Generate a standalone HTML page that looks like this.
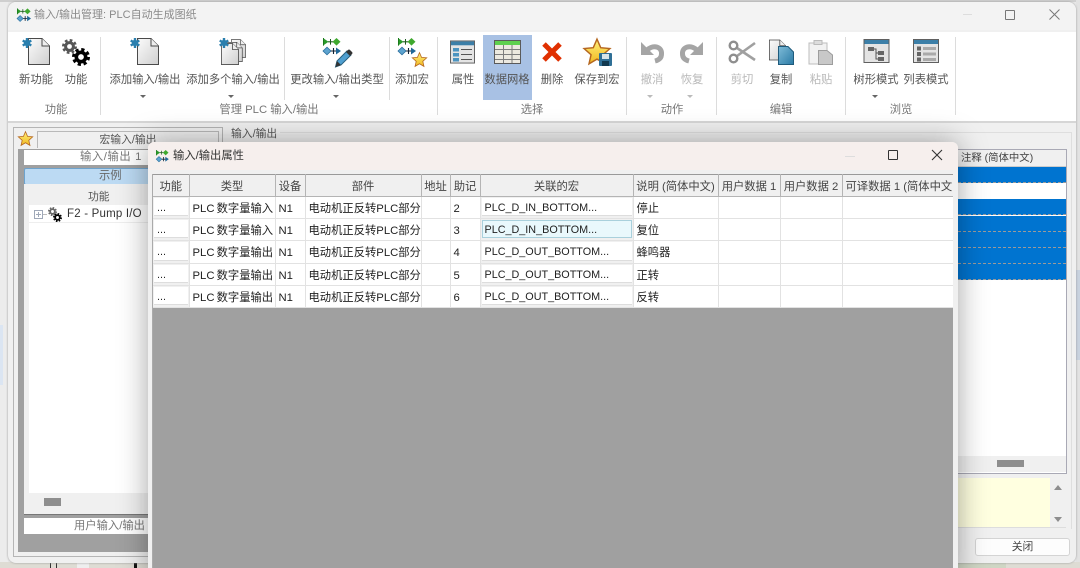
<!DOCTYPE html>
<html lang="zh"><head><meta charset="utf-8"><title>输入/输出管理</title>
<style>
html,body{margin:0;padding:0;width:1080px;height:568px;overflow:hidden;background:#e8e8e8}
body{font-family:"Liberation Sans","Noto Sans CJK SC",sans-serif;font-size:11.3px;color:#333;position:relative}
.a{position:absolute}
.t{position:absolute;white-space:nowrap;text-align:center;transform:translateX(-50%);line-height:14px;color:#555}
.d{color:#b8b8b8}
.sep{position:absolute;width:1px;background:#dcdcdc;top:37px}
.ar{position:absolute;top:95px;width:0;height:0;border-left:3px solid transparent;border-right:3px solid transparent;border-top:3px solid #666}
svg{position:absolute;overflow:visible}
table{border-collapse:collapse;table-layout:fixed;position:absolute;left:0;top:0;width:801px}
td,th{padding:2px 0 0 3px;height:19px;border-right:1px solid #e2e2e2;border-bottom:1px solid #e2e2e2;font-weight:normal;white-space:nowrap;overflow:hidden;color:#222;background:#fff;text-align:left;line-height:14px}
th{background:#f0f0f0;color:#444;text-align:center;padding:2px 0 0 0;height:19px;border-top:1px solid #999;border-right:1px solid #b4b4b4;border-bottom:1px solid #b4b4b4}
td.p{word-spacing:-1px}
tr.x td{height:20px}
td.b,tr.x td.b{padding:0;background:#f0f0f0;height:21px}
tr.x td.b{height:22px}
td.b div{margin:1px 1px 2px 1px;height:17px;line-height:20px;background:#fff;padding-left:3px;border-bottom:1px solid #ddd;font-size:10.8px;overflow:hidden}
tr.x td.b div{height:18px}
td.b div.h{background:#e9f8fc;outline:1px solid #a9d0dc;outline-offset:-1px}
.blue{position:absolute;left:958px;width:108px;height:15px;background:#0074d0;border-bottom:1px dashed #9a9a9a}
</style></head><body>

<svg width="0" height="0" style="position:absolute">
<defs>
<linearGradient id="gd" x1="0" y1="0" x2="1" y2="1"><stop offset="0" stop-color="#fbfbfb"/><stop offset="1" stop-color="#cfcfcf"/></linearGradient>
<linearGradient id="gb" x1="0" y1="0" x2="1" y2="1"><stop offset="0" stop-color="#7fbcd8"/><stop offset="1" stop-color="#2a7aa5"/></linearGradient>
<linearGradient id="gs" x1="0" y1="0" x2="0" y2="1"><stop offset="0" stop-color="#fff07a"/><stop offset="1" stop-color="#f0b820"/></linearGradient>
<symbol id="doc" viewBox="0 0 22 27" overflow="visible"><path d="M.5.5H14L21.5 8V26.5H.5Z" fill="url(#gd)" stroke="#4a4a4a"/><path d="M14 .5V8H21.5" fill="#eee" stroke="#4a4a4a"/></symbol>
<symbol id="ast" viewBox="0 0 10 10"><path d="M5 0V10M.7 2.5L9.3 7.5M.7 7.5L9.3 2.5" stroke="#2a7fae" stroke-width="2.4"/><circle cx="5" cy="5" r="3.2" fill="#2a7fae"/></symbol>
<symbol id="gear" viewBox="0 0 20 20"><circle cx="10" cy="10" r="5.2" fill="none" stroke="currentColor" stroke-width="4"/><circle cx="10" cy="10" r="8.4" fill="none" stroke="currentColor" stroke-width="3.200" stroke-dasharray="3.600 3"/></symbol>
<symbol id="flow" viewBox="0 0 18 17" overflow="visible"><path d="M0 0L5.500 3.800L0 7.600Z" fill="#2a9a2a"/><path d="M.5 0V7.600" stroke="#1d7a1d" stroke-width="1"/><path d="M5 3.800H10" stroke="#1d5a1d" stroke-width="1.100"/><path d="M7.500 1V6.600" stroke="#1d5a1d" stroke-width="1"/><path d="M9.500 3.800L13.500 0L17.500 3.800L13.500 7.600Z" fill="#3fa92f"/><path d="M0 13L4 9.200L8 13L4 16.800Z" fill="#5da3cf" stroke="#2a6f9e" stroke-width=".8"/><path d="M8 13H14M10.500 10V16" stroke="#123" stroke-width="1.100"/><path d="M13 9.500L18 13L13 16.500Z" fill="#1f6798"/></symbol>
<symbol id="star" viewBox="0 0 24 24" overflow="visible"><path d="M12 1L15.300 8.600L23.500 9.400L17.300 14.900L19.100 23L12 18.800L4.900 23L6.700 14.900L.5 9.400L8.700 8.600Z" fill="url(#gs)" stroke="#b5671f" stroke-width="1.300"/></symbol>
<symbol id="win" viewBox="0 0 26 24"><rect x=".5" y=".5" width="25" height="23" fill="#e4e4e4" stroke="#606060"/><rect x="1" y="1" width="24" height="4" fill="#3c7fa8"/></symbol>
</defs></svg>

<!-- outside bits -->
<div class="a" style="left:0;top:0;width:8px;height:568px;background:#ececec"></div>
<div class="a" style="left:0;top:325px;width:3px;height:60px;background:#dbe5f2"></div>
<div class="a" style="left:0;top:0;width:1080px;height:2px;background:#cfcfcf"></div>
<div class="a" style="left:1076px;top:0;width:4px;height:568px;background:#e2e2e2"></div>
<div class="a" style="left:1076px;top:270px;width:4px;height:90px;background:#c9d2df"></div>
<div class="a" style="left:0;top:562px;width:1080px;height:6px;background:#dedcd4"></div>
<div class="a" style="left:50px;top:562px;width:1px;height:6px;background:#333"></div>
<div class="a" style="left:56px;top:562px;width:1px;height:6px;background:#333"></div>
<div class="a" style="left:77px;top:562px;width:12px;height:6px;background:#eee"></div>
<div class="a" style="left:134px;top:562px;width:3px;height:6px;background:#111"></div>
<div class="a" style="left:958px;top:563px;width:48px;height:5px;background:#cfd6c4"></div>

<!-- main window -->
<div class="a" style="left:8px;top:2px;width:1068px;height:561px;background:#f0f0f0;border-radius:8px;box-shadow:0 0 2px #999;overflow:hidden">
 <div class="a" style="left:0;top:0;width:1068px;height:28px;background:#f3f3f3"></div>
 <div class="a" style="left:0;top:30px;width:1068px;height:89px;background:#fff;border-bottom:2px solid #d6d6d6"></div>
</div>

<!-- title -->
<svg style="left:17px;top:8px" width="14" height="14"><use href="#flow" width="14" height="14"/></svg>
<div class="a" style="left:34px;top:7px;line-height:16px;color:#8a8a8a;font-size:11px;white-space:nowrap">输入/输出管理: PLC自动生成图纸</div>
<div class="a" style="left:963px;top:14px;width:9px;height:1px;background:#ddd"></div>
<div class="a" style="left:1005px;top:10px;width:8px;height:8px;border:1px solid #777;border-radius:1px"></div>
<svg style="left:1049px;top:9px" width="11" height="11"><path d="M.5.5L10.500 10.500M10.500.5L.5 10.500" stroke="#777" stroke-width="1"/></svg>

<!-- ribbon selection -->
<div class="a" style="left:483px;top:35px;width:49px;height:65px;background:#a8c1e4"></div>

<!-- separators -->
<div class="sep" style="left:100px;height:78px"></div>
<div class="sep" style="left:284px;height:63px"></div>
<div class="sep" style="left:389px;height:63px"></div>
<div class="sep" style="left:437px;height:78px"></div>
<div class="sep" style="left:626px;height:78px"></div>
<div class="sep" style="left:716px;height:78px"></div>
<div class="sep" style="left:845px;height:78px"></div>
<div class="sep" style="left:955px;height:78px"></div>

<!-- icons -->
<svg style="left:28px;top:38px" width="22" height="27"><use href="#doc" width="22" height="27"/></svg>
<svg style="left:22px;top:38px" width="10" height="10"><use href="#ast" width="10" height="10"/></svg>
<svg style="left:62px;top:39px;color:#555" width="15" height="15"><use href="#gear" width="15" height="15"/></svg>
<svg style="left:72px;top:48px;color:#000" width="18" height="18"><use href="#gear" width="18" height="18"/></svg>
<svg style="left:137px;top:38px" width="22" height="27"><use href="#doc" width="22" height="27"/></svg>
<svg style="left:130px;top:38px" width="10" height="10"><use href="#ast" width="10" height="10"/></svg>
<svg style="left:231px;top:39px" width="15" height="19"><use href="#doc" width="15" height="19"/></svg>
<svg style="left:226px;top:42px" width="17" height="20"><use href="#doc" width="17" height="20"/></svg>
<svg style="left:221px;top:43px" width="18" height="22"><use href="#doc" width="18" height="22"/></svg>
<svg style="left:219px;top:38px" width="10" height="10"><use href="#ast" width="10" height="10"/></svg>
<svg style="left:323px;top:38px" width="18" height="17"><use href="#flow" width="18" height="17"/></svg>
<svg style="left:334px;top:48px" width="18" height="20"><path d="M1.500 19L3 13L13 3L17 7L7 17Z" fill="#4f9fd0" stroke="#26607f"/><path d="M12 4L14 2Q15 1 16 2L18 4Q19 5 18 6L16 8Z" fill="#333"/><path d="M1.500 19L3 13L7 17Z" fill="#333"/></svg>
<svg style="left:398px;top:38px" width="18" height="17"><use href="#flow" width="18" height="17"/></svg>
<svg style="left:412px;top:52px" width="15" height="15"><use href="#star" width="15" height="15"/></svg>
<svg style="left:450px;top:40px" width="25" height="24"><use href="#win" width="25" height="24"/><rect x="3" y="8" width="6" height="3.500" fill="#4c94c0"/><rect x="3" y="13" width="6" height="3.500" fill="#4c94c0"/><rect x="3" y="18" width="6" height="3.500" fill="#4c94c0"/><path d="M11 9.500H22M11 14.500H22M11 19.500H22" stroke="#555"/></svg>
<svg style="left:494px;top:40px" width="27" height="24"><rect x=".5" y=".5" width="26" height="23" fill="#ece9e0" stroke="#5a5a5a"/><rect x="1" y="1" width="25" height="4" fill="#5ed04e"/><path d="M1 9.500H26M1 14.500H26M1 19.500H26M9.500 5V23M18 5V23" stroke="#7d7d7d"/></svg>
<svg style="left:541px;top:41px" width="22" height="22"><path d="M3 3L19 19M19 3L3 19" stroke="#e03000" stroke-width="5"/></svg>
<svg style="left:583px;top:38px" width="28" height="27"><use href="#star" width="28" height="27"/></svg>
<svg style="left:599px;top:53px" width="13" height="13"><rect width="13" height="13" rx="1" fill="#2f6f96"/><rect x="3" y="1" width="7" height="5" fill="#d8e4ea"/><rect x="3" y="8" width="7" height="5" fill="#12394f"/></svg>
<svg style="left:640px;top:41px" width="24" height="22"><path d="M7 9C14 3 22 6 21.500 13C21.500 17 19 19 15 20" fill="none" stroke="#a5a5a5" stroke-width="5"/><path d="M1 1V14H14Z" fill="#a5a5a5"/></svg>
<svg style="left:680px;top:41px" width="24" height="22"><path d="M17 9C10 3 2 6 2.500 13C2.500 17 5 19 9 20" fill="none" stroke="#a5a5a5" stroke-width="5"/><path d="M23 1V14H10Z" fill="#a5a5a5"/></svg>
<svg style="left:728px;top:40px" width="28" height="24"><path d="M9 8L27 20M9 16L27 3" stroke="#a0a0a0" stroke-width="2.600"/><circle cx="5.500" cy="5.500" r="3.800" fill="#fff" stroke="#8e8e8e" stroke-width="2.400"/><circle cx="5.500" cy="18.500" r="3.800" fill="#fff" stroke="#8e8e8e" stroke-width="2.400"/></svg>
<svg style="left:769px;top:39px" width="17" height="22"><use href="#doc" width="17" height="22"/></svg>
<svg style="left:778px;top:46px" width="16" height="19"><path d="M.5.5H10L15.500 6V18.500H.5Z" fill="url(#gb)" stroke="#1f5b7c"/></svg>
<svg style="left:808px;top:40px" width="25" height="25"><path d="M1 3H19V24H1Z" fill="#f2f2f2" stroke="#bdbdbd"/><rect x="6" y="0.500" width="8" height="4" fill="#ddd" stroke="#bbb"/><path d="M10.500 10.500H19L24.500 15V24.500H10.500Z" fill="#c8c8c8" stroke="#9d9d9d"/></svg>
<svg style="left:863px;top:39px" width="27" height="24"><use href="#win" width="27" height="24"/><rect x="5" y="8" width="6" height="4" fill="#666"/><rect x="15" y="12" width="6" height="4" fill="#666"/><rect x="15" y="18" width="6" height="4" fill="#666"/><path d="M11 10H13V20H15M13 14H15" stroke="#555" fill="none"/></svg>
<svg style="left:913px;top:39px" width="26" height="24"><use href="#win" width="26" height="24"/><rect x="4" y="7.500" width="4" height="4" fill="#666"/><rect x="4" y="13" width="4" height="4" fill="#666"/><rect x="4" y="18.500" width="4" height="4" fill="#666"/><rect x="10" y="8" width="13" height="3" fill="#aaa"/><rect x="10" y="13.500" width="13" height="3" fill="#aaa"/><rect x="10" y="19" width="13" height="3" fill="#aaa"/></svg>

<!-- ribbon labels -->
<div class="t" style="left:36px;top:73px">新功能</div>
<div class="t" style="left:76px;top:73px">功能</div>
<div class="t" style="left:145px;top:73px">添加输入/输出</div>
<div class="t" style="left:233px;top:73px">添加多个输入/输出</div>
<div class="t" style="left:337px;top:73px">更改输入/输出类型</div>
<div class="t" style="left:412px;top:73px">添加宏</div>
<div class="t" style="left:463px;top:73px">属性</div>
<div class="t" style="left:507px;top:73px">数据网格</div>
<div class="t" style="left:552px;top:73px">删除</div>
<div class="t" style="left:597px;top:73px">保存到宏</div>
<div class="t d" style="left:652px;top:73px">撤消</div>
<div class="t d" style="left:692px;top:73px">恢复</div>
<div class="t d" style="left:742px;top:73px">剪切</div>
<div class="t" style="left:781px;top:73px">复制</div>
<div class="t d" style="left:821px;top:73px">粘贴</div>
<div class="t" style="left:876px;top:73px">树形模式</div>
<div class="t" style="left:926px;top:73px">列表模式</div>
<div class="ar" style="left:140px"></div><div class="ar" style="left:228px"></div><div class="ar" style="left:333px"></div>
<div class="ar" style="left:647px;border-top-color:#bbb"></div><div class="ar" style="left:687px;border-top-color:#bbb"></div><div class="ar" style="left:872px"></div>
<div class="t" style="left:56px;top:103px;color:#777">功能</div>
<div class="t" style="left:269px;top:103px;color:#777">管理 PLC 输入/输出</div>
<div class="t" style="left:532px;top:103px;color:#777">选择</div>
<div class="t" style="left:672px;top:103px;color:#777">动作</div>
<div class="t" style="left:781px;top:103px;color:#777">编辑</div>
<div class="t" style="left:901px;top:103px;color:#777">浏览</div>

<!-- left pane -->
<div class="a" style="left:13px;top:127px;width:208px;height:428px;border:1px solid #b5b5b5;background:#f0f0f0"></div>
<svg style="left:18px;top:131px" width="15" height="15"><use href="#star" width="15" height="15"/></svg>
<div class="a" style="left:37px;top:131px;width:180px;height:16px;border:1px solid #b9b9b9;border-bottom:0;background:#f0f0f0;text-align:center;line-height:16px;color:#555;font-size:10.800px">宏输入/输出</div>
<div class="a" style="left:18px;top:149px;width:200px;height:403px;background:#a0a0a0"></div>
<div class="a" style="left:24px;top:150px;width:190px;height:15px;background:#fff;text-align:left;line-height:15px;color:#777"><span style="margin-left:56px;letter-spacing:.6px">输入/输出 1</span></div>
<div class="a" style="left:24px;top:168px;width:190px;height:15px;background:#bcdaf3;border:1px solid #6ea3cd;border-radius:2px;line-height:15px;color:#666"><span style="margin-left:74px">示例</span></div>
<div class="a" style="left:24px;top:184px;width:190px;height:330px;background:#f0f0f0;border-bottom:1px solid #777"></div>
<div class="a" style="left:29px;top:190px;width:185px;height:303px;background:#fff"></div>
<div class="a" style="left:29px;top:190px;width:185px;height:15px;background:#f0f0f0;line-height:15px;color:#555"><span style="margin-left:59px;font-size:10.800px">功能</span></div>
<div class="a" style="left:29px;top:222px;width:185px;height:1px;background:#eee"></div>
<div class="a" style="left:34px;top:210px;width:7px;height:7px;border:1px solid #9fa8b8"></div>
<div class="a" style="left:36px;top:214px;width:5px;height:1px;background:#9fa8b8"></div>
<div class="a" style="left:38px;top:212px;width:1px;height:5px;background:#9fa8b8"></div>
<div class="a" style="left:43px;top:214px;width:4px;height:1px;background:#bbb"></div>
<svg style="left:48px;top:207px;color:#666" width="9" height="9"><use href="#gear" width="9" height="9"/></svg>
<svg style="left:53px;top:213px;color:#000" width="9" height="9"><use href="#gear" width="9" height="9"/></svg>
<div class="a" style="left:67px;top:207px;line-height:15px;color:#333;font-size:11.500px;letter-spacing:.2px;white-space:nowrap">F2 - Pump I/O</div>
<div class="a" style="left:44px;top:498px;width:17px;height:8px;background:#8e8e8e"></div>
<div class="a" style="left:24px;top:518px;width:190px;height:16px;background:#fff;line-height:16px;color:#777"><span style="margin-left:50px">用户输入/输出</span></div>

<!-- right background pane -->
<div class="a" style="left:231px;top:127px;line-height:14px;font-size:10.800px;color:#555">输入/输出</div>
<div class="a" style="left:280px;top:132px;width:791px;height:1px;background:#dedede"></div>
<div class="a" style="left:1071px;top:132px;width:1px;height:397px;background:#dedede"></div>
<div class="a" style="left:900px;top:149px;width:166px;height:323px;background:#fff;border:1px solid #a9a9b5;border-left:0"></div>
<div class="a" style="left:900px;top:150px;width:166px;height:16px;background:#f0f0f0;line-height:16px;color:#444;border-bottom:1px solid #ccc"><span style="margin-left:61px;font-size:10.400px">注释 (简体中文)</span></div>
<div class="blue" style="top:167px"></div>
<div class="blue" style="top:199px"></div>
<div class="blue" style="top:216px"></div>
<div class="blue" style="top:232px"></div>
<div class="blue" style="top:248px"></div>
<div class="blue" style="top:264px"></div>
<div class="a" style="left:958px;top:456px;width:108px;height:16px;background:#f0f0f0"></div>
<div class="a" style="left:997px;top:460px;width:27px;height:7px;background:#8e8e8e"></div>
<div class="a" style="left:958px;top:478px;width:92px;height:49px;background:#ffffe0"></div>
<div class="a" style="left:958px;top:527px;width:108px;height:1px;background:#ddd"></div>
<div class="a" style="left:1054px;top:485px;border-left:4px solid transparent;border-right:4px solid transparent;border-bottom:5px solid #8e8e8e"></div>
<div class="a" style="left:1054px;top:517px;border-left:4px solid transparent;border-right:4px solid transparent;border-top:5px solid #8e8e8e"></div>
<div class="a" style="left:975px;top:538px;width:93px;height:16px;background:#fdfdfd;border:1px solid #d4d4d4;border-radius:3px;text-align:center;line-height:16px;color:#444;font-size:10.800px">关闭</div>

<!-- dialog -->
<div class="a" style="left:148px;top:142px;width:810px;height:440px;background:#f0f0f0;border-radius:6px 6px 0 0;box-shadow:0 0 30px rgba(0,0,0,.36)">
 <div class="a" style="left:0;top:0;width:810px;height:28px;background:#f6efed;border-radius:6px 6px 0 0"></div>
 <svg style="left:8px;top:8px" width="13" height="12"><use href="#flow" width="13" height="12"/></svg>
 <div class="a" style="left:25px;top:6px;line-height:16px;color:#333;white-space:nowrap">输入/输出属性</div>
 <div class="a" style="left:697px;top:14px;width:10px;height:1px;background:#ddd"></div>
 <div class="a" style="left:740px;top:8px;width:8px;height:8px;border:1.500px solid #333;border-radius:1px"></div>
 <svg style="left:784px;top:8px" width="10" height="10"><path d="M0 0L10 10M10 0L0 10" stroke="#333" stroke-width="1.100"/></svg>

 <div class="a" style="left:4px;top:32px;width:801px;height:394px;background:#a0a0a0;overflow:hidden;border-left:1px solid #aaa;box-sizing:border-box">
 <table>
 <colgroup><col style="width:36px"><col style="width:86px"><col style="width:30px"><col style="width:116px"><col style="width:29px"><col style="width:30px"><col style="width:153px"><col style="width:85px"><col style="width:62px"><col style="width:62px"><col style="width:112px"></colgroup>
 <tr><th>功能</th><th>类型</th><th>设备</th><th>部件</th><th>地址</th><th>助记</th><th>关联的宏</th><th>说明 (简体中文)</th><th>用户数据 1</th><th>用户数据 2</th><th style="text-align:left;padding-left:3px">可译数据 1 (简体中文</th></tr>
 <tr><td class="b"><div>...</div></td><td class="p">PLC 数字量输入</td><td>N1</td><td>电动机正反转PLC部分</td><td></td><td>2</td><td class="b"><div>PLC_D_IN_BOTTOM...</div></td><td>停止</td><td></td><td></td><td></td></tr>
 <tr><td class="b"><div>...</div></td><td class="p">PLC 数字量输入</td><td>N1</td><td>电动机正反转PLC部分</td><td></td><td>3</td><td class="b"><div class="h">PLC_D_IN_BOTTOM...</div></td><td>复位</td><td></td><td></td><td></td></tr>
 <tr class="x"><td class="b"><div>...</div></td><td class="p">PLC 数字量输出</td><td>N1</td><td>电动机正反转PLC部分</td><td></td><td>4</td><td class="b"><div>PLC_D_OUT_BOTTOM...</div></td><td>蜂鸣器</td><td></td><td></td><td></td></tr>
 <tr><td class="b"><div>...</div></td><td class="p">PLC 数字量输出</td><td>N1</td><td>电动机正反转PLC部分</td><td></td><td>5</td><td class="b"><div>PLC_D_OUT_BOTTOM...</div></td><td>正转</td><td></td><td></td><td></td></tr>
 <tr><td class="b"><div>...</div></td><td class="p">PLC 数字量输出</td><td>N1</td><td>电动机正反转PLC部分</td><td></td><td>6</td><td class="b"><div>PLC_D_OUT_BOTTOM...</div></td><td>反转</td><td></td><td></td><td></td></tr>
 </table>
 </div>
</div>
</body></html>
